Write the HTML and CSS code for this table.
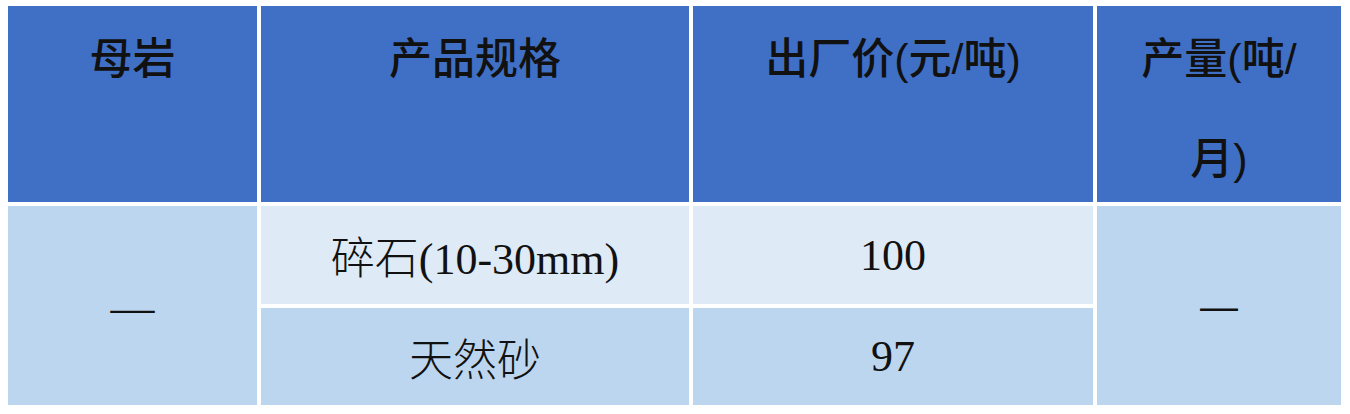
FILE: index.html
```html
<!DOCTYPE html>
<html lang="zh">
<head>
<meta charset="utf-8">
<title>母岩产品</title>
<link rel="stylesheet" href="styles.css">
</head>
<body>
<div class="sheet">
  <div class="cell head">母岩</div>
  <div class="cell head">产品规格</div>
  <div class="cell head">出厂价(元/吨)</div>
  <div class="cell head head-wrap">产量(吨/<br>月)</div>

  <div class="cell span dark rock"><span class="dash">—</span></div>
  <div class="cell light body r1 c2">碎石(10-30mm)</div>
  <div class="cell light body r1 c3">100</div>
  <div class="cell span dark out"><span class="dash dash-sans">—</span></div>

  <div class="cell dark body r2 c2">天然砂</div>
  <div class="cell dark body r2 c3">97</div>
</div>
</body>
</html>
```

FILE: styles.css
```css
html, body {
  margin: 0;
  padding: 0;
  background: #ffffff;
}

.sheet {
  display: grid;
  grid-template-columns: 249px 428px 400px 244px;
  grid-template-rows: 196px 98px 97px;
  column-gap: 4px;
  row-gap: 4px;
  padding: 6px 0 0 8px;
  width: 1333px;
}

.cell {
  color: #111;
  text-align: center;
}

.head {
  background: #4070c5;
  font-family: "Liberation Sans", "Noto Sans CJK SC", sans-serif;
  font-size: 43px;
  font-weight: 500;
  line-height: 100px;
  padding-top: 3px;
  box-sizing: border-box;
}

.body {
  display: flex;
  align-items: center;
  justify-content: center;
  font-family: "Liberation Serif", "Noto Sans CJK SC", serif;
  font-size: 44px;
  font-weight: 300;
}

.light {
  background: #deeaf6;
}

.dark {
  background: #bdd6ef;
}

.span {
  grid-row: 2 / 4;
  display: flex;
  align-items: center;
  justify-content: center;
}

.rock {
  grid-column: 1;
}

.out {
  grid-column: 4;
}

.r1 { grid-row: 2; }
.r2 { grid-row: 3; }
.c2 { grid-column: 2; }
.c3 { grid-column: 3; }

.dash {
  font-family: "Liberation Serif", serif;
  font-size: 44px;
  line-height: 1;
  padding-top: 4px;
}

.dash-sans {
  font-family: "Liberation Sans", sans-serif;
  font-size: 38px;
  padding-top: 2px;
}
```
